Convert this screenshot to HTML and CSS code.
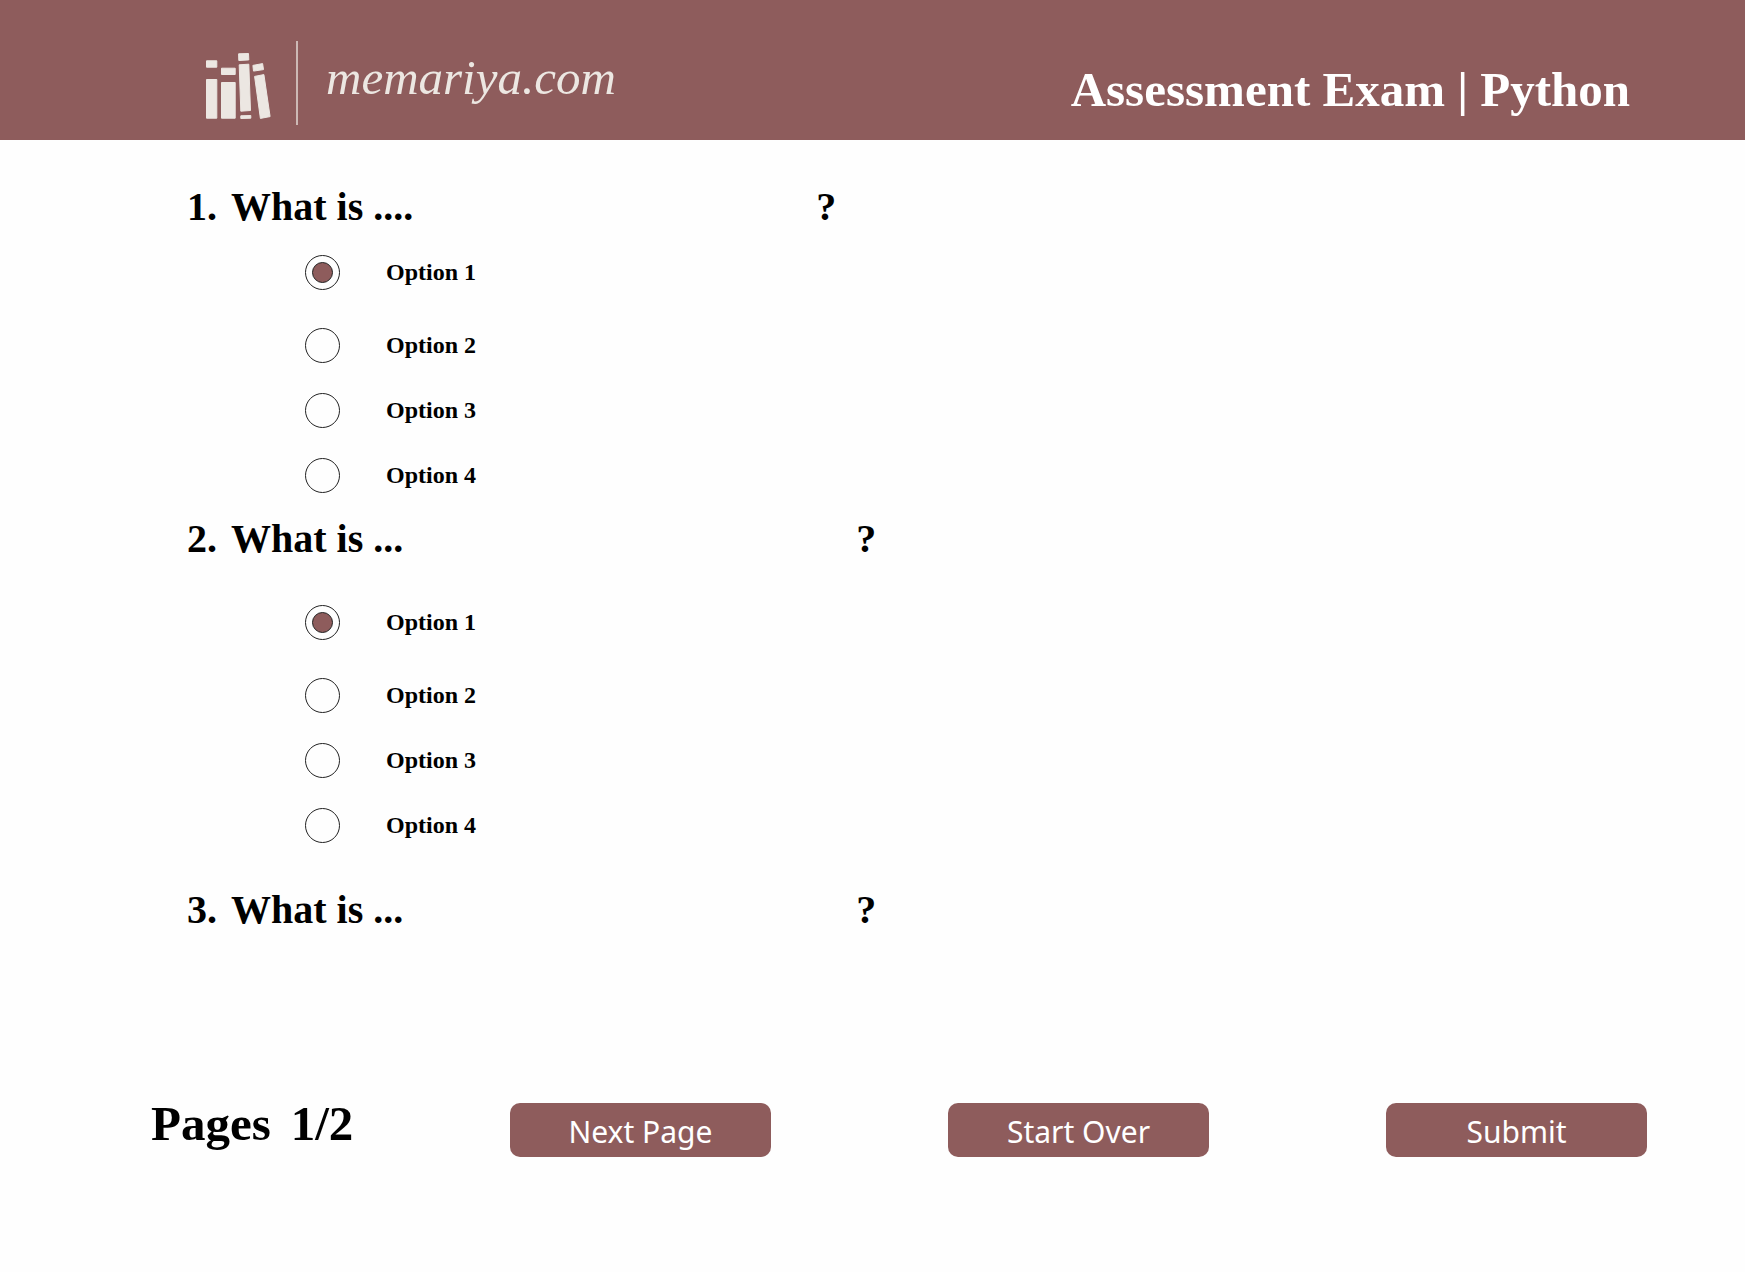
FILE: index.html
```html
<!DOCTYPE html>
<html lang="en">
<head>
  <meta charset="utf-8">
  <meta name="viewport" content="width=device-width, initial-scale=1">
  <title>Assessment Exam | Python</title>
  <link rel="stylesheet" href="styles.css">
</head>
<body>
  <header class="site-header">
    <a class="brand" href="#">
      <svg class="brand-icon" viewBox="0 0 66 84" aria-hidden="true" fill="currentColor" stroke="currentColor" stroke-width="1" stroke-linejoin="round">
        <path d="M.5 19.8H10.8V26.2H.5ZM.5 38.5H10.8V77.2H.5Z"/>
        <path d="M15.5 27.2H29.2V33.5H15.5ZM15.5 41.5H29.2V77.2H15.5Z"/>
        <path d="M32.6 12.8L42.5 12.5L42.8 18.9L32.8 19.5ZM33.2 23.8L42.8 23.2L44.5 69.5L34.8 70.2ZM34.8 74.8L44.8 74.5V77.2L34.8 77.5Z"/>
        <path d="M46.9 24.4L56.6 22.6L57.5 28.6L47.5 30.1ZM48.6 35.4L57.9 33.6L64.1 75.6L54.4 77.4Z"/>
      </svg>
      <span class="brand-rule"></span>
      <span class="brand-name">memariya.com</span>
    </a>
    <h1 class="exam-title">Assessment Exam | Python</h1>
  </header>

  <main>
    <form class="exam">
      <section class="question">
        <h2 class="prompt" id="q1"><span class="number">1.</span><span>What is ....</span><span class="blank"></span><span>?</span></h2>
        <div class="options" role="radiogroup" aria-labelledby="q1">
          <label class="option"><input class="radio" type="radio" name="q1" checked>Option 1</label>
          <label class="option"><input class="radio" type="radio" name="q1">Option 2</label>
          <label class="option"><input class="radio" type="radio" name="q1">Option 3</label>
          <label class="option"><input class="radio" type="radio" name="q1">Option 4</label>
        </div>
      </section>

      <section class="question question-spaced">
        <h2 class="prompt" id="q2"><span class="number">2.</span><span>What is ...</span><span class="blank blank-long"></span><span>?</span></h2>
        <div class="options" role="radiogroup" aria-labelledby="q2">
          <label class="option"><input class="radio" type="radio" name="q2" checked>Option 1</label>
          <label class="option"><input class="radio" type="radio" name="q2">Option 2</label>
          <label class="option"><input class="radio" type="radio" name="q2">Option 3</label>
          <label class="option"><input class="radio" type="radio" name="q2">Option 4</label>
        </div>
      </section>

      <section class="question">
        <h2 class="prompt"><span class="number">3.</span><span>What is ...</span><span class="blank blank-long"></span><span>?</span></h2>
      </section>

      <div class="actions">
        <p class="pages"><span>Pages</span><span>1/2</span></p>
        <div class="buttons">
          <button class="button" type="button">Next Page</button>
          <button class="button" type="reset">Start Over</button>
          <button class="button" type="submit">Submit</button>
        </div>
      </div>
    </form>
  </main>
</body>
</html>
```
FILE: styles.css
```css
:root {
  --rose: #8e5c5c;
  --cream: #ece7e2;
  --serif: "Liberation Serif", "Times New Roman", serif;
}

* {
  box-sizing: border-box;
}

body {
  margin: 0;
  background: #fefefe;
  color: #000;
  font-family: var(--serif);
}

h1,
h2,
p {
  margin: 0;
}

.site-header {
  display: flex;
  justify-content: space-between;
  align-items: center;
  padding: 41px 115px 15px 206px;
  background: var(--rose);
}

.brand {
  display: flex;
  align-items: center;
  color: var(--cream);
  text-decoration: none;
}

.brand-icon {
  width: 66px;
  height: 84px;
}

.brand-rule {
  width: 2px;
  height: 84px;
  margin: 0 28px 0 24px;
  background: #cdb9b5;
}

.brand-name {
  padding-bottom: 10px;
  font-size: 49px;
  font-style: italic;
  line-height: 56px;
}

.exam-title {
  padding-top: 13px;
  color: #fff;
  font-size: 49px;
  font-weight: 700;
  line-height: 56px;
}

.exam {
  padding: 43px 98px 48px 151px;
}

.question {
  margin-bottom: 22px;
}

.question-spaced {
  margin-bottom: 43px;
}

.prompt {
  display: flex;
  font-size: 40px;
  font-weight: 700;
  line-height: 48px;
}

.number {
  width: 66px;
  margin-right: 14px;
  text-align: right;
}

.blank {
  width: 403px;
}

.blank-long {
  width: 453px;
}

.options {
  display: flex;
  flex-direction: column;
  align-items: flex-start;
  gap: 30px;
  margin-top: 24px;
  padding-left: 154px;
}

.question-spaced .options {
  margin-top: 42px;
}

.option {
  display: flex;
  align-items: center;
  gap: 46px;
  font-size: 24px;
  font-weight: 700;
  line-height: 35px;
}

.option:first-child {
  margin-bottom: 8px;
}

.radio {
  display: grid;
  place-items: center;
  width: 35px;
  height: 35px;
  margin: 0;
  appearance: none;
  border: 1px solid #222;
  border-radius: 50%;
}

.radio:checked::before {
  content: "";
  width: 21px;
  height: 21px;
  box-sizing: border-box;
  border: 1px solid #222;
  border-radius: 50%;
  background: var(--rose);
}

.actions {
  display: flex;
  justify-content: space-between;
  align-items: flex-start;
  margin-top: 169px;
}

.pages {
  display: flex;
  gap: 20px;
  font-size: 49px;
  font-weight: 700;
  line-height: 42px;
}

.buttons {
  display: flex;
  gap: 177px;
}

.button {
  width: 261px;
  padding: 4px 0 0;
  border: 0;
  border-radius: 10px;
  background: var(--rose);
  color: #fff;
  font-family: "Noto Sans", sans-serif;
  font-size: 30px;
  line-height: 50px;
}
```
